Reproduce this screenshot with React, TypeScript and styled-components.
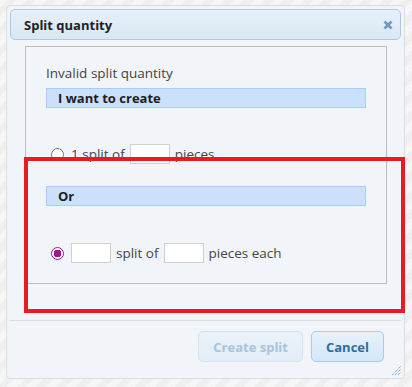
import React from "react";
import styled, { createGlobalStyle } from "styled-components";

const Global = createGlobalStyle`
  html, body { margin: 0; padding: 0; }
  body {
    width: 412px;
    height: 387px;
    overflow: hidden;
    font-family: "Open Sans", "DejaVu Sans", sans-serif;
    background-color: #f3f3f3;
    background-image: repeating-linear-gradient(
      -45deg,
      #f6f6f6 0px,
      #f6f6f6 7px,
      #efefef 7px,
      #efefef 14px
    );
  }
`;

const Page = styled.div`
  position: relative;
  width: 412px;
  height: 387px;
  padding: 5px 0 0 6px;
  box-sizing: border-box;
`;

const Dialog = styled.div`
  width: 399px;
  height: 374px;
  box-sizing: border-box;
  border: 1px solid #dcdcdc;
  border-radius: 4px;
  background: #f1f4f8;
  padding: 3px;
  display: flex;
  flex-direction: column;
  position: relative;
`;

const TitleBar = styled.div`
  height: 31px;
  box-sizing: border-box;
  border: 1px solid #a9cbe6;
  border-radius: 5px;
  background: linear-gradient(#e6f0f9, #d9e8f5);
  display: flex;
  align-items: center;
  justify-content: space-between;
  padding: 0 5px 0 13px;
`;

const Title = styled.span`
  font-size: 13px;
  font-weight: 700;
  color: #222;
`;

const CloseButton = styled.button`
  width: 14px;
  height: 14px;
  border: 0;
  padding: 0;
  background: none;
  display: flex;
  align-items: center;
  justify-content: center;
`;

const Content = styled.div`
  flex: 1;
  padding: 6px 14px 0 15px;
  display: flex;
  flex-direction: column;
`;

const Fieldset = styled.div`
  height: 238px;
  box-sizing: border-box;
  border: 1px solid #bdbdbd;
  padding: 17px 20px 0 20px;
  display: flex;
  flex-direction: column;
`;

const Message = styled.div`
  font-size: 13.5px;
  color: #444;
  line-height: 18px;
  height: 24px;
`;

const SectionBar = styled.div`
  height: 20px;
  box-sizing: border-box;
  background: #cbe0fb;
  border: 1px solid #a9cdf6;
  padding-left: 11px;
  font-size: 13px;
  font-weight: 700;
  color: #1e1e1e;
  line-height: 18px;
`;

const OptionRow = styled.label<{ $top: number; $bottom: number }>`
  display: flex;
  align-items: center;
  gap: 5px;
  height: 20px;
  margin-top: ${(p) => p.$top}px;
  margin-bottom: ${(p) => p.$bottom}px;
  padding-left: 5px;
  font-size: 13.5px;
  color: #444;
`;

const Radio = styled.span<{ $checked?: boolean }>`
  width: 13px;
  height: 13px;
  box-sizing: border-box;
  border-radius: 50%;
  border: 1.5px solid ${(p) => (p.$checked ? "#a0168f" : "#777")};
  background: ${(p) =>
    p.$checked
      ? "radial-gradient(circle, #a0168f 0 3.6px, #fff 4px)"
      : "#fff"};
  margin-right: 2px;
  flex: none;
`;

const NumberBox = styled.span`
  width: 40px;
  height: 20px;
  box-sizing: border-box;
  border: 1px solid #d0d0d0;
  background: #fff;
  flex: none;
`;

const Footer = styled.div`
  margin-top: auto;
  border-top: 1px solid #dcdcdc;
  height: 55px;
  box-sizing: border-box;
  display: flex;
  justify-content: flex-end;
  align-items: flex-start;
  gap: 8px;
  padding: 10px 17px 0 0;
`;

const Button = styled.button<{ $disabled?: boolean }>`
  height: 31px;
  box-sizing: border-box;
  border-radius: 5px;
  font-family: "Open Sans", "DejaVu Sans", sans-serif;
  font-size: 13px;
  font-weight: 700;
  padding: 0 14px;
  border: 1px solid ${(p) => (p.$disabled ? "#d3e3f1" : "#a9cbe6")};
  color: ${(p) => (p.$disabled ? "#a9c3da" : "#2e6d9e")};
  background: ${(p) =>
    p.$disabled
      ? "linear-gradient(#eaf2f9, #e3edf7)"
      : "linear-gradient(#e6f1fa, #d5e7f6)"};
`;

const Grip = styled.svg`
  position: absolute;
  right: 3px;
  bottom: 3px;
`;

const Highlight = styled.div`
  position: absolute;
  left: 24px;
  top: 157px;
  width: 381px;
  height: 156px;
  box-sizing: border-box;
  border: 4px solid #e81b1f;
  pointer-events: none;
`;

export default function App() {
  return (
    <>
      <Global />
      <Page>
        <Dialog>
          <TitleBar>
            <Title>Split quantity</Title>
            <CloseButton aria-label="close">
              <svg width="10" height="10" viewBox="0 0 10 10">
                <path
                  d="M1.5 1.5 L8.5 8.5 M8.5 1.5 L1.5 8.5"
                  stroke="#6b9bc4"
                  strokeWidth="2.6"
                  strokeLinecap="butt"
                />
              </svg>
            </CloseButton>
          </TitleBar>
          <Content>
            <Fieldset>
              <Message>Invalid split quantity</Message>
              <SectionBar>I want to create</SectionBar>
              <OptionRow $top={36} $bottom={22}>
                <Radio />
                <span>1 split of</span>
                <NumberBox />
                <span>pieces</span>
              </OptionRow>
              <SectionBar>Or</SectionBar>
              <OptionRow $top={37} $bottom={0}>
                <Radio $checked />
                <NumberBox />
                <span>split of</span>
                <NumberBox />
                <span>pieces each</span>
              </OptionRow>
            </Fieldset>
          </Content>
          <Footer>
            <Button $disabled disabled>
              Create split
            </Button>
            <Button>Cancel</Button>
          </Footer>
          <Grip width="10" height="10" viewBox="0 0 10 10">
            <path
              d="M1 10 L10 1 M4 10 L10 4 M7 10 L10 7"
              stroke="#5a8fc4"
              strokeWidth="1"
              strokeDasharray="1 1"
            />
          </Grip>
        </Dialog>
        <Highlight />
      </Page>
    </>
  );
}
